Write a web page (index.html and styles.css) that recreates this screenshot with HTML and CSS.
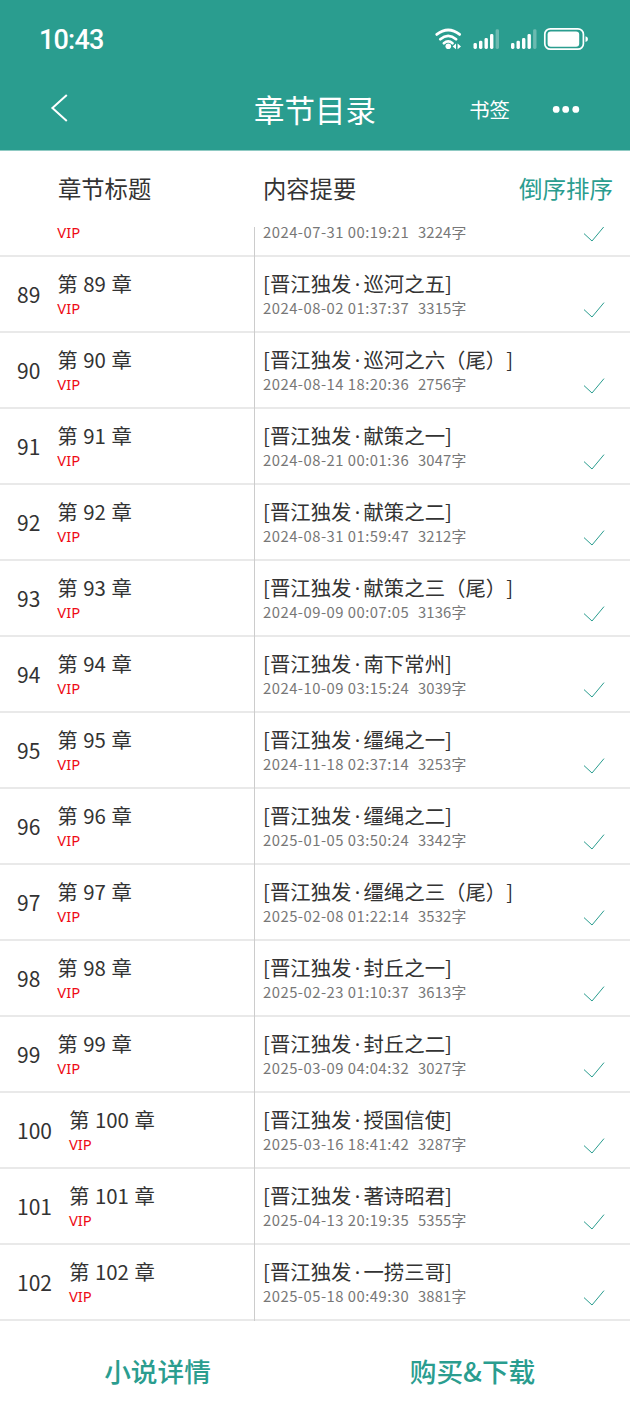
FILE: index.html
```html
<!DOCTYPE html>
<html lang="zh-CN">
<head>
    <meta charset="UTF-8">
    <meta name="viewport" content="width=device-width, initial-scale=1.0">
    <title>章节目录</title>
    <link rel="stylesheet" href="styles.css">
</head>
<body>
    <header class="top">
        <div class="status-bar">
            <span class="time">10:43</span>
            <svg class="status-icons" width="156" height="28" viewBox="0 0 156 28">
                <!-- wifi -->
                <g fill="none" stroke="#fff" stroke-width="2.8" stroke-linecap="round">
                    <path d="M2.8 9.4 Q14.2 0.7 25.6 9.4"/>
                    <path d="M6.3 14.2 Q14.2 7.5 22.1 14.2"/>
                    <path d="M9.9 18.2 Q14.2 14.5 18.5 18.2"/>
                </g>
                <circle cx="14.3" cy="21.3" r="2.8" fill="#fff"/>
                <path d="M22 18.6v5.6l-3.4-2.8zM23.6 18.6v5.6l3.4-2.8z" fill="#fff"/>
                <!-- signal 1 -->
                <g fill="#fff">
                    <rect x="39.5" y="18" width="3.4" height="6" rx="1.4"/>
                    <rect x="45" y="15.7" width="3.4" height="8.3" rx="1.4"/>
                    <rect x="50.5" y="13" width="3.4" height="11" rx="1.4"/>
                    <rect x="56" y="9" width="3.4" height="15" rx="1.4"/>
                    <rect x="61.6" y="4.3" width="3.4" height="19.7" rx="1.4" opacity=".3"/>
                </g>
                <!-- signal 2 -->
                <g fill="#fff">
                    <rect x="77" y="18" width="3.4" height="6" rx="1.4"/>
                    <rect x="82.5" y="15.7" width="3.4" height="8.3" rx="1.4"/>
                    <rect x="88" y="13" width="3.4" height="11" rx="1.4"/>
                    <rect x="93.5" y="9" width="3.4" height="15" rx="1.4"/>
                    <rect x="99.1" y="4.3" width="3.4" height="19.7" rx="1.4" opacity=".3"/>
                </g>
                <!-- battery -->
                <rect x="110.8" y="3.8" width="38.6" height="20.4" rx="5.5" fill="none" stroke="#fff" stroke-width="1.7"/>
                <rect x="113.6" y="6.4" width="31.6" height="15.4" rx="3.2" fill="#fff"/>
                <path d="M151.5 11.2q2.5 .4 2.5 2.9t-2.5 2.9z" fill="#fff"/>
            </svg>
        </div>
        <nav class="nav-bar">
            <svg class="back" width="20" height="30" viewBox="0 0 20 30">
                <path d="M16.8 1 L2.4 14 L16.8 27" fill="none" stroke="#fff" stroke-width="2"/>
            </svg>
            <h1 class="title">章节目录</h1>
            <div class="nav-right">
                <span class="bookmark">书签</span>
                <svg width="28" height="8" viewBox="0 0 28 8" fill="#fff">
                    <circle cx="4.2" cy="4.4" r="3.4"/>
                    <circle cx="13.7" cy="4.4" r="3.4"/>
                    <circle cx="23.8" cy="4.4" r="3.4"/>
                </svg>
            </div>
        </nav>
    </header>
    <section class="list-head">
        <span class="head-title">章节标题</span>
        <span class="head-summary">内容提要</span>
        <span class="head-sort">倒序排序</span>
    </section>
    <section class="list-container">
        <ul class="chapter-list" id="chapter-list"></ul>
    </section>
    <footer class="bottom-bar">
        <span class="bottom-button">小说详情</span>
        <span class="bottom-button">购买&amp;下载</span>
    </footer>
    <script>
        // number, summary, date, word count
        const chapters = [
            [88, '巡河之四', '2024-07-31 00:19:21', 3224],
            [89, '巡河之五', '2024-08-02 01:37:37', 3315],
            [90, '巡河之六（尾）', '2024-08-14 18:20:36', 2756],
            [91, '献策之一', '2024-08-21 00:01:36', 3047],
            [92, '献策之二', '2024-08-31 01:59:47', 3212],
            [93, '献策之三（尾）', '2024-09-09 00:07:05', 3136],
            [94, '南下常州', '2024-10-09 03:15:24', 3039],
            [95, '缰绳之一', '2024-11-18 02:37:14', 3253],
            [96, '缰绳之二', '2025-01-05 03:50:24', 3342],
            [97, '缰绳之三（尾）', '2025-02-08 01:22:14', 3532],
            [98, '封丘之一', '2025-02-23 01:10:37', 3613],
            [99, '封丘之二', '2025-03-09 04:04:32', 3027],
            [100, '授国信使', '2025-03-16 18:41:42', 3287],
            [101, '著诗昭君', '2025-04-13 20:19:35', 5355],
            [102, '一捞三哥', '2025-05-18 00:49:30', 3881]
        ];

        const ul = document.getElementById('chapter-list');

        ul.innerHTML = chapters.map(([num, summary, date, words]) => `
            <li class="chapter">
                <div class="chapter-left">
                    <span class="number">${num}</span>
                    <div>
                        <p class="name">第 ${num} 章</p>
                        <p class="vip">VIP</p>
                    </div>
                </div>
                <div class="chapter-right">
                    <div>
                        <p class="name">[晋江独发<span class="dot">·</span>${summary}]</p>
                        <p class="info"><span class="date">${date}</span><span class="words">${words}字</span></p>
                    </div>
                    <svg class="check" width="22" height="18" viewBox="0 0 22 18">
                        <path d="M1 8.6 L9 16 L21 1.6" fill="none" stroke="#2a9d8f" stroke-width="1"/>
                    </svg>
                </div>
            </li>`).join('');
    </script>
</body>
</html>
```
FILE: styles.css
```css
* {
    margin: 0;
    padding: 0;
    box-sizing: border-box;
}
body {
    display: flex;
    flex-direction: column;
    height: 1422px;
    overflow: hidden;
    background-color: #fff;
    color: #333;
    font-family: "Noto Sans CJK SC", sans-serif;
    text-spacing-trim: space-all;
}
.top {
    height: 151px;
    background-color: #2a9d8f;
    background-clip: padding-box;
    border-bottom: 1px solid #8fcac3;
    color: #fff;
}
.status-bar {
    display: flex;
    justify-content: space-between;
    align-items: center;
    height: 78px;
    padding: 0 40px 0 39px;
}
.time {
    font-family: Roboto, sans-serif;
    font-size: 27px;
    font-weight: 500;
    letter-spacing: -0.8px;
    line-height: 30px;
    padding-top: 2px;
}
.nav-bar {
    display: grid;
    grid-template-columns: 1fr auto 1fr;
    align-items: center;
    height: 62px;
    padding: 0 50px 0 50px;
}
.title {
    font-size: 30.5px;
    font-weight: 400;
    line-height: 40px;
}
.nav-right {
    display: flex;
    justify-content: flex-end;
    align-items: center;
    gap: 42px;
}
.bookmark {
    font-size: 20.4px;
    line-height: 30px;
}
.list-head {
    display: flex;
    align-items: center;
    height: 76px;
    padding: 0 17px 3px 58px;
    font-size: 23.3px;
    line-height: 34px;
}
.head-title {
    width: 205px;
}
.head-summary {
    flex: 1;
}
.head-sort {
    color: #2a9d8f;
    font-size: 23.5px;
}
.list-container {
    display: flex;
    flex-direction: column;
    justify-content: flex-end;
    height: 1094px;
    overflow: hidden;
}
.chapter-list {
    list-style: none;
}
/* inset line so the column divider runs over it */
.chapter {
    display: flex;
    height: 76px;
    box-shadow: inset 0 -2px #e9e9e9;
}
.chapter-left {
    display: flex;
    width: 255px;
    gap: 17px;
    padding: 12px 0 0 17px;
    border-right: 1px solid #ccc;
}
.number {
    padding-top: 11px;
    font-size: 21px;
    line-height: 28px;
}
.name {
    padding-bottom: 1px;
    font-size: 20.4px;
    line-height: 28px;
    white-space: nowrap;
    word-spacing: 1px;
}
.dot {
    display: inline-block;
    width: 12px;
    font-family: "Noto Sans", sans-serif;
    line-height: 1;
    text-align: center;
}
.vip {
    color: #ee0a14;
    font-family: "Noto Sans", sans-serif;
    font-size: 14.8px;
    line-height: 20px;
}
.chapter-right {
    display: flex;
    flex: 1;
    justify-content: space-between;
    align-items: flex-start;
    padding: 12px 25px 0 8px;
}
.info {
    display: flex;
    color: #777;
    font-size: 14.8px;
    line-height: 20px;
    white-space: nowrap;
}
.date {
    width: 155px;
    letter-spacing: 0.5px;
}
.words {
    letter-spacing: 0.15px;
}
.check {
    margin-top: 32px;
}
.bottom-bar {
    display: flex;
    height: 101px;
    color: #2a9d8f;
    font-size: 26.7px;
    font-weight: 500;
}
.bottom-button {
    flex: 1;
    text-align: center;
    line-height: 100px;
}
```
